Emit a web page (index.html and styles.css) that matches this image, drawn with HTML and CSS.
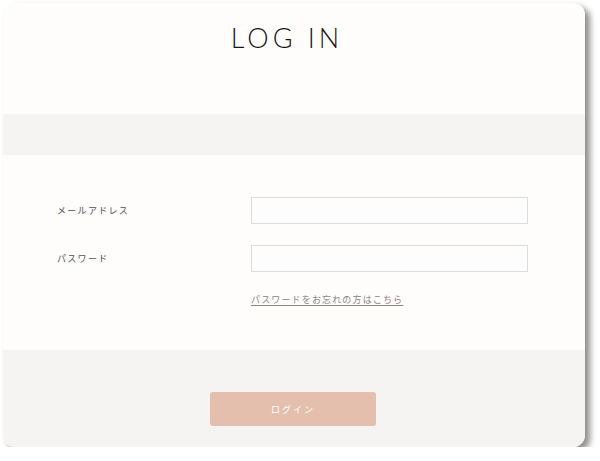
FILE: index.html
```html
<!DOCTYPE html>
<html lang="ja">
<head>
<meta charset="utf-8">
<link rel="stylesheet" href="styles.css">
</head>
<body>
<div class="card">
  <header class="head">
    <h1 class="title">LOG IN</h1>
  </header>
  <div class="band"></div>
  <section class="form">
    <div class="row">
      <label class="label">メールアドレス</label>
      <div class="input"></div>
    </div>
    <div class="row">
      <label class="label">パスワード</label>
      <div class="input"></div>
    </div>
    <div class="row">
      <span></span>
      <a class="link" href="#">パスワードをお忘れの方はこちら</a>
    </div>
  </section>
  <footer class="foot">
    <button class="btn">ログイン</button>
  </footer>
</div>
</body>
</html>
```
FILE: styles.css
```css
html, body {
  margin: 0;
  padding: 0;
  background: #ffffff;
}
body {
  padding: 3px 0 0 3px;
  font-family: "Noto Sans CJK JP", "Noto Sans", sans-serif;
}
.card {
  width: 582px;
  height: 444px;
  border-radius: 12px;
  overflow: hidden;
  box-shadow: 5px 4px 6px rgba(0, 0, 0, 0.45);
  display: flex;
  flex-direction: column;
  background: #fefdfc;
}
.head {
  height: 111px;
  background: #fefdfc;
  display: flex;
  justify-content: center;
  padding-right: 14px;
}
.title {
  margin: 18px 0 0 0;
  font-family: "Lato", "Liberation Sans", sans-serif;
  font-weight: 300;
  font-size: 27px;
  line-height: 34px;
  letter-spacing: 4px;
  color: #1a1614;
}
.band {
  height: 41px;
  background: #f5f4f3;
}
.form {
  height: 195px;
  box-sizing: border-box;
  padding: 42px 0 0 54px;
  background: #fefdfc;
  display: flex;
  flex-direction: column;
  gap: 21px;
}
.row {
  display: grid;
  grid-template-columns: 194px 277px;
  align-items: center;
}
.label {
  font-size: 9px;
  letter-spacing: 1.3px;
  color: #555250;
}
.input {
  height: 27px;
  box-sizing: border-box;
  border: 1px solid #dedcdb;
  background: #fefdfd;
}
.link {
  font-size: 9px;
  line-height: 14px;
  letter-spacing: 1.15px;
  color: #8d837e;
  text-decoration: underline;
  text-underline-offset: 2px;
}
.foot {
  flex: 1;
  background: #f6f4f2;
  display: flex;
  justify-content: center;
  padding-top: 42px;
}
.btn {
  width: 166px;
  height: 34px;
  margin-left: -2px;
  border: none;
  border-radius: 3px;
  background: #e4bfad;
  color: #ffffff;
  font-family: "Noto Sans CJK JP", sans-serif;
  font-size: 9px;
  letter-spacing: 2px;
  padding: 0;
}
```
